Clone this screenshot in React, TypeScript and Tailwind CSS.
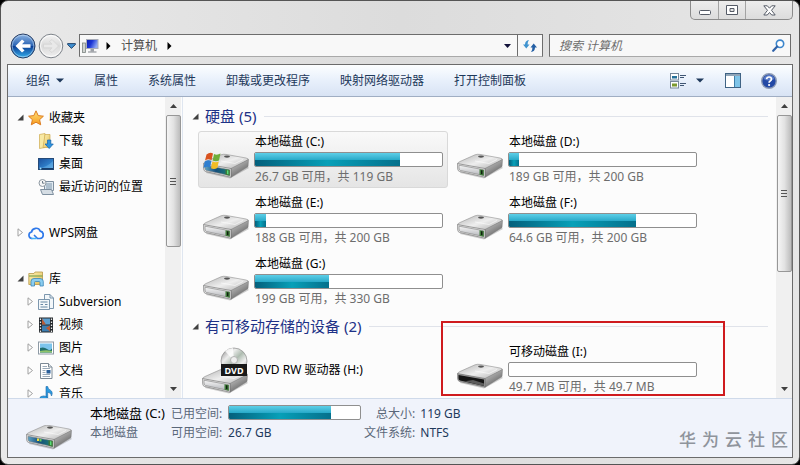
import React from "react";

type Drive = {
  name: string;
  kind: "system" | "disk" | "dvd" | "removable";
  free?: number;
  total?: number;
  unit?: string;
  selected?: boolean;
  marked?: boolean;
};

const disks: Drive[] = [
  { name: "本地磁盘 (C:)", kind: "system", free: 26.7, total: 119, unit: "GB", selected: true },
  { name: "本地磁盘 (D:)", kind: "disk", free: 189, total: 200, unit: "GB" },
  { name: "本地磁盘 (E:)", kind: "disk", free: 188, total: 200, unit: "GB" },
  { name: "本地磁盘 (F:)", kind: "disk", free: 64.6, total: 200, unit: "GB" },
  { name: "本地磁盘 (G:)", kind: "disk", free: 199, total: 330, unit: "GB" },
];

const removable: Drive[] = [
  { name: "DVD RW 驱动器 (H:)", kind: "dvd" },
  { name: "可移动磁盘 (I:)", kind: "removable", free: 49.7, total: 49.7, unit: "MB", marked: true },
];

function Gradients() {
  return (
    <svg className="absolute h-0 w-0" aria-hidden="true">
      <defs>
        <linearGradient id="drvTop" x1="0" y1="0" x2="1" y2="1">
          <stop offset="0" stopColor="#b4b4b4" />
          <stop offset="0.5" stopColor="#eeeeee" />
          <stop offset="1" stopColor="#a9a9a9" />
        </linearGradient>
        <linearGradient id="drvFront" x1="0" y1="0" x2="0" y2="1">
          <stop offset="0" stopColor="#f6f6f6" />
          <stop offset="1" stopColor="#b4b6bb" />
        </linearGradient>
        <linearGradient id="drvSide" x1="0" y1="0" x2="0.6" y2="1">
          <stop offset="0" stopColor="#d6d6d6" />
          <stop offset="1" stopColor="#5e5e5e" />
        </linearGradient>
        <linearGradient id="sysFront" x1="0" y1="0" x2="1" y2="0">
          <stop offset="0" stopColor="#5fa3c4" />
          <stop offset="0.45" stopColor="#154f7c" />
          <stop offset="1" stopColor="#1e7f73" />
        </linearGradient>
        <linearGradient id="disc" x1="0" y1="0" x2="1" y2="1">
          <stop offset="0" stopColor="#7d7d7d" />
          <stop offset="0.3" stopColor="#ededed" />
          <stop offset="0.5" stopColor="#aebcb0" />
          <stop offset="0.7" stopColor="#f0f0f0" />
          <stop offset="1" stopColor="#808080" />
        </linearGradient>
        <linearGradient id="backBlue" x1="0" y1="0" x2="0" y2="1">
          <stop offset="0" stopColor="#8fb6e4" />
          <stop offset="0.48" stopColor="#2b64b4" />
          <stop offset="0.52" stopColor="#0c3f96" />
          <stop offset="1" stopColor="#35b2ef" />
        </linearGradient>
        <linearGradient id="fwdGray" x1="0" y1="0" x2="0" y2="1">
          <stop offset="0" stopColor="#f4f4f4" />
          <stop offset="0.5" stopColor="#dadada" />
          <stop offset="1" stopColor="#f0f0f0" />
        </linearGradient>
        <linearGradient id="screenBlue" x1="0" y1="0" x2="1" y2="0.4">
          <stop offset="0" stopColor="#0b1ea8" />
          <stop offset="0.5" stopColor="#1c36d6" />
          <stop offset="1" stopColor="#8fa8f4" />
        </linearGradient>
        <linearGradient id="folder" x1="0" y1="0" x2="1" y2="1">
          <stop offset="0" stopColor="#fdf3b5" />
          <stop offset="1" stopColor="#e2bb55" />
        </linearGradient>
        <linearGradient id="star" x1="0" y1="0" x2="0" y2="1">
          <stop offset="0" stopColor="#ffe27a" />
          <stop offset="1" stopColor="#f79a1c" />
        </linearGradient>
        <linearGradient id="desk" x1="0" y1="0" x2="1" y2="1">
          <stop offset="0" stopColor="#1b4f9c" />
          <stop offset="0.6" stopColor="#2f7fc9" />
          <stop offset="1" stopColor="#6cb4e8" />
        </linearGradient>
      </defs>
    </svg>
  );
}

function DriveBody({ kind }: { kind: Drive["kind"] }) {
  const slot = kind === "removable";
  return (
    <g>
      <path d="M3 19 27 24.500 46 14 44 12 5 15Z" fill="#000" opacity=".18" />
      <path d="M.5 10Q.5 8.500 3 7.500L18 .8Q20 0 23 .4L43 4Q46 4.600 45 6L28 15.500 2 10.500Z" fill="url(#drvTop)" stroke="#8e8e8e" strokeWidth=".6" />
      <path d="M28 14.500 45.500 5.500 45 12.500 28 23.200Z" fill="url(#drvSide)" stroke="#777" strokeWidth=".5" />
      <path d="M.6 9.600 28 14.500V23.200L2.500 17.500Q.5 17 .6 14Z" fill={slot ? "#9a9a9a" : "#e6e6e6"} stroke="#6c6c6c" strokeWidth=".6" />
      {slot ? (
        <g>
          <path d="M1.500 11 27 15.500V22L3 16.500Q1.500 16 1.500 14Z" fill="#151515" />
          <path d="M8 17.300 16 16 27 19.500V22Z" fill="#5c5c5c" />
        </g>
      ) : (
        <g>
          <path d="M2 11.200 26.500 15.700V21.500L3.500 16.500Q2 16 2 14Z" fill={kind === "system" ? "url(#sysFront)" : "url(#drvFront)"} stroke="#7d7d7d" strokeWidth=".6" />
          <path d="M22.500 15.200 26.800 16V21.800L22.500 20.800Z" fill="#3f7a3a" />
          <path d="M24 16.200 25.400 16.500V20.300L24 20Z" fill={kind === "system" ? "#58e07a" : "#0f1f0f"} />
        </g>
      )}
      <ellipse cx="24" cy="2.600" rx="3" ry="1.100" fill="#555" />
      <path d="M18 7 32 9.500 40 5.500" fill="none" stroke="#fff" strokeWidth=".8" opacity=".7" />
    </g>
  );
}

function WindowsFlag() {
  return (
    <g>
      <path d="M3.500 3.500Q7 .8 10 2.500L8.600 9Q5.500 7.500 2 9.500Z" fill="#d9531f" />
      <path d="M11 3Q14 4.500 17.500 2.500L16 9.500Q13 11 9.700 9.500Z" fill="#6fae3a" />
      <path d="M1.700 10.500Q5 8.500 8.400 10L7 16.500Q4 15 .5 17Z" fill="#2f7fd0" />
      <path d="M9.400 10.500Q12.500 12 15.800 10.500L14.300 17Q11 18.700 8 17.200Z" fill="#f3bd25" />
    </g>
  );
}

function DriveIcon({ kind }: { kind: Drive["kind"] }) {
  return (
    <svg width="48" height="48" viewBox="0 0 48 48" className="shrink-0" aria-hidden="true">
      {kind === "dvd" && <circle cx="32" cy="15" r="13" fill="url(#disc)" stroke="#8d8d8d" strokeWidth=".7" />}
      {kind === "dvd" && <path d="M32 15 23 5Q27 2 31 2Z" fill="#fff" opacity=".8" />}
      <g transform={kind === "dvd" ? "translate(0 23)" : "translate(1 18)"}>
        <DriveBody kind={kind} />
      </g>
      {kind === "system" && (
        <g transform="translate(1 15)">
          <WindowsFlag />
        </g>
      )}
      {kind === "dvd" && (
        <g>
          <circle cx="32" cy="14" r="3.500" fill="#eee" stroke="#b3b3b3" />
          <rect x="19" y="18" width="26" height="12" fill="#191919" />
          <text x="32" y="27.500" textAnchor="middle" fontSize="9" fontWeight="700" fontFamily="Noto Sans, sans-serif" fill="#fff">
            DVD
          </text>
        </g>
      )}
    </svg>
  );
}

function CapacityBar({ used, label }: { used: number; label: string }) {
  return (
    <div role="meter" aria-label={label} aria-valuenow={Math.round(used)} aria-valuemin={0} aria-valuemax={100} className="h-[15px] w-full overflow-hidden rounded-[2px] border border-[#8f8f8f] bg-white">
      <div className="flex h-full flex-col" style={{ width: `${used}%` }}>
        <div className="flex-1 bg-linear-to-b from-[#5ccfe8] to-[#25a9c8]" />
        <div className="flex-1 bg-linear-to-r from-[#04607c] via-[#07a0b8] to-[#05708c]" />
      </div>
    </div>
  );
}

function DriveTile({ drive }: { drive: Drive }) {
  const { name, kind, free, total, unit, selected, marked } = drive;
  const hasSpace = free !== undefined && total !== undefined;
  return (
    <div className="relative">
      <button
        type="button"
        className={
          selected
            ? "flex h-[57px] w-full items-center gap-1 rounded-[3px] border border-[#d9d9d9] bg-linear-to-b from-[#f9f9f9] to-[#e5e5e5] pr-1 pl-[3px] text-left"
            : "flex h-[57px] w-full items-center gap-1 rounded-[3px] border border-transparent pr-1 pl-[3px] text-left"
        }
      >
        <DriveIcon kind={kind} />
        <span className="flex min-w-0 flex-1 flex-col gap-0.5">
          <span className="px-px leading-4 whitespace-nowrap text-black">{name}</span>
          {hasSpace && <CapacityBar used={((total - free) / total) * 100} label={name} />}
          {hasSpace && (
            <span className="px-px leading-4 whitespace-nowrap text-[#6d6d6d]">
              {free} {unit} 可用，共 {total} {unit}
            </span>
          )}
        </span>
      </button>
      {marked && <div className="pointer-events-none absolute -top-5 -right-[23px] bottom-0.5 -left-[11px] border-2 border-[#cf1b1e]" />}
    </div>
  );
}

function DriveGroup({ title, drives }: { title: string; drives: Drive[] }) {
  return (
    <section className="pb-[3px]">
      <h2 className="flex h-7 items-center pr-2 pb-0.5 pl-[9px] text-[15px] text-[#1e3287]">
        <Expanded />
        <span className="ml-1.5 whitespace-nowrap">{title}</span>
        <span className="ml-2 h-px flex-1 bg-[#e0e3ea]" />
      </h2>
      <div className="grid grid-cols-[repeat(auto-fill,250px)] gap-1 pl-[15px]">
        {drives.map((d) => (
          <DriveTile key={d.name} drive={d} />
        ))}
      </div>
    </section>
  );
}

function Expanded() {
  return (
    <svg width="7" height="7" viewBox="0 0 7 7" className="shrink-0" aria-hidden="true">
      <path d="M6.500 .5V6.500H.5Z" fill="#404040" />
    </svg>
  );
}

function Collapsed() {
  return (
    <svg width="7" height="9" viewBox="0 0 7 9" className="shrink-0" aria-hidden="true">
      <path d="M1 .8 5.500 4.500 1 8.200Z" fill="#fff" stroke="#a0a0a0" />
    </svg>
  );
}

function DownArrow() {
  return (
    <svg width="8" height="5" viewBox="0 0 8 5" aria-hidden="true">
      <path d="M0 .5H8L4 4.500Z" fill="#1e395b" />
    </svg>
  );
}

function RightArrow() {
  return (
    <svg width="5" height="8" viewBox="0 0 5 8" aria-hidden="true">
      <path d="M.5 0V8L4.500 4Z" fill="#000" />
    </svg>
  );
}

const treeIcons: Record<string, React.ReactNode> = {
  star: <path d="M8 .8 10.200 5.600 15.400 6.200 11.600 9.700 12.700 14.800 8 12.200 3.300 14.800 4.400 9.700.6 6.200 5.800 5.600Z" fill="url(#star)" stroke="#dc7d22" strokeWidth="1" />,
  download: (
    <g>
      <path d="M1.500 1.500 7 .5V14.500L1.500 15.500Z" fill="#f8e9a4" stroke="#cda94f" strokeWidth=".7" />
      <path d="M7 1.500H12V14.500H5Z" fill="url(#folder)" stroke="#cda94f" strokeWidth=".7" />
      <path d="M9.500 7H12.800V11H15.300L11.200 15.500 7 11H9.500Z" fill="#2f94e0" stroke="#1463a9" strokeWidth=".7" />
    </g>
  ),
  desktop: (
    <g>
      <rect x=".5" y="2.500" width="15" height="11" fill="url(#desk)" stroke="#254a78" />
      <path d="M1 12Q8 12 15 5V13H1Z" fill="#69b1e8" opacity=".5" />
      <rect x="1" y="12" width="14" height="1.500" fill="#173e6c" />
      <circle cx="2.500" cy="12.500" r="1" fill="#9ee1ff" />
    </g>
  ),
  recent: (
    <g>
      <path d="M6.500 2.500H15.500V11.500H6.500Z" fill="#dfe9f1" stroke="#7e8f9f" />
      <path d="M8 5H14M8 7H14M8 9H14" stroke="#7c95aa" />
      <path d="M2.500 10.500H13.500L15.500 15.500H4.500Z" fill="#d5dde4" stroke="#7e8f9f" />
      <circle cx="4.500" cy="4" r="3.500" fill="#f6f6f6" stroke="#8f9aa3" />
      <path d="M4.500 2V4.200H6.500" fill="none" stroke="#60707f" strokeWidth=".9" />
    </g>
  ),
  cloud: (
    <g fill="none" strokeWidth="1.700" strokeLinecap="round">
      <path d="M4 13.500A3.300 3.300 0 0 1 3.500 7 4.600 4.600 0 0 1 12.300 6.200 3.700 3.700 0 0 1 12 13.500H9.500L6.500 10.500" stroke="#2f79ea" />
      <path d="M4 13.500H8" stroke="#45b4f4" />
    </g>
  ),
  library: (
    <g>
      <path d="M.8 2.500H6L7 1H14.500V13.500H.8Z" fill="url(#folder)" stroke="#b8974a" strokeWidth=".8" />
      <path d="M1 5H14.500" stroke="#7fa650" strokeWidth="1.200" />
      <path d="M3 15V10.500Q3 7.500 6 7.500H12Q15.300 7.500 15.300 10.500V15H12V11.500Q12 10.500 11 10.500H7.500Q6.500 10.500 6.500 11.500V15Z" fill="#8bcdf0" stroke="#3c87b8" strokeWidth=".8" />
    </g>
  ),
  subversion: (
    <g fill="#f3f7fa" stroke="#6e8ba5" strokeWidth=".9">
      <path d="M6.500 .5H12L15.500 4V14.500H6.500Z" />
      <path d="M12 .5V4H15.500" fill="none" />
      <path d="M.5 5.500H11.500V15.500H.5Z" />
      <path d="M2.500 8H9.500M2.500 10.500H5M2.500 13H9.500M7 10.500H9.500" stroke="#587b9b" />
    </g>
  ),
  video: (
    <g>
      <rect x="1" y=".5" width="14" height="15" fill="#22262b" />
      <rect x="4" y="1.500" width="8" height="6" fill="#5c9fd0" />
      <rect x="4" y="8.500" width="8" height="6" fill="#3c7db0" />
      <path d="M4 1.500 8 7.500 4 7.500ZM12 8.500 8 11 12 14.500Z" fill="#b95b35" />
      <path d="M2.500 1.500V15M13.500 1.500V15" stroke="#e9e9e9" strokeWidth="1.300" strokeDasharray="1.500 1.500" />
    </g>
  ),
  picture: (
    <g>
      <rect x=".5" y="2" width="15" height="12" fill="#fff" stroke="#8e9aa5" />
      <rect x="2" y="3.500" width="12" height="9" fill="#7cc4ec" />
      <path d="M2 8Q6 6.500 9 9T14 8.500V12.500H2Z" fill="#1f6e6d" />
      <path d="M2 11Q8 9.500 14 11V12.500H2Z" fill="#8fc36b" />
    </g>
  ),
  document: (
    <g>
      <path d="M2.500 .5H10.500L14 4V15.500H2.500Z" fill="#fff" stroke="#7d8a96" />
      <path d="M10.500 .5V4H14" fill="#e2e8ed" stroke="#7d8a96" />
      <path d="M4.500 3.500H9M4.500 5.500H12M4.500 7.500H7.500M4.500 9.500H7.500M4.500 11.500H12M4.500 13.500H12" stroke="#9aaab9" />
      <rect x="8.500" y="7" width="4" height="3.500" fill="#2a5f99" />
    </g>
  ),
  music: (
    <g fill="#2b9be0" stroke="#1b67a7" strokeWidth=".6">
      <path d="M8 .5H9.700Q9.800 3 12.500 4.200 15.300 6 13.500 10 13.500 6.700 9.700 6.200V12.500H8Z" />
      <ellipse cx="5.700" cy="12.700" rx="4" ry="2.800" />
    </g>
  ),
};

type Node = { label: string; icon: string; depth: 0 | 1; open?: boolean; branch?: boolean };

const tree: Node[][] = [
  [
    { label: "收藏夹", icon: "star", depth: 0, open: true, branch: true },
    { label: "下载", icon: "download", depth: 1 },
    { label: "桌面", icon: "desktop", depth: 1 },
    { label: "最近访问的位置", icon: "recent", depth: 1 },
  ],
  [{ label: "WPS网盘", icon: "cloud", depth: 0, branch: true }],
  [
    { label: "库", icon: "library", depth: 0, open: true, branch: true },
    { label: "Subversion", icon: "subversion", depth: 1, branch: true },
    { label: "视频", icon: "video", depth: 1, branch: true },
    { label: "图片", icon: "picture", depth: 1, branch: true },
    { label: "文档", icon: "document", depth: 1, branch: true },
    { label: "音乐", icon: "music", depth: 1, branch: true },
  ],
];

function TreeRow({ node }: { node: Node }) {
  return (
    <li>
      <button type="button" className={node.depth === 0 ? "flex h-[23px] w-full items-center pl-[9px]" : "flex h-[23px] w-full items-center pl-[19px]"}>
        <span className="flex w-[11px] shrink-0">{node.branch && (node.open ? <Expanded /> : <Collapsed />)}</span>
        <svg width="16" height="16" viewBox="0 0 16 16" className="shrink-0" aria-hidden="true">
          {treeIcons[node.icon]}
        </svg>
        <span className="ml-[5px] whitespace-nowrap text-black">{node.label}</span>
      </button>
    </li>
  );
}

function Scrollbar({ thumb }: { thumb: React.ReactNode }) {
  return (
    <div className="flex w-4 shrink-0 flex-col items-center bg-[#f0f0f0]" aria-hidden="true">
      <span className="flex h-[18px] items-center">
        <svg width="7" height="4" viewBox="0 0 7 4">
          <path d="M0 4 3.500 0 7 4Z" fill="#404040" />
        </svg>
      </span>
      {thumb}
      <span className="flex-1" />
      <span className="flex h-[18px] items-center">
        <svg width="7" height="4" viewBox="0 0 7 4">
          <path d="M0 0 3.500 4 7 0Z" fill="#404040" />
        </svg>
      </span>
    </div>
  );
}

function Grip() {
  return (
    <span className="flex w-1.5 flex-col gap-0.5">
      <span className="h-px bg-[#555]" />
      <span className="h-px bg-[#555]" />
      <span className="h-px bg-[#555]" />
    </span>
  );
}

function TitleBar() {
  return (
    <header className="flex h-[33px] items-start justify-end">
      <div className="flex h-[19px] overflow-hidden rounded-b-[5px] border border-t-0 border-[#8b8b8b] bg-linear-to-b from-[#ededed] to-[#dcdcdc]">
        <button type="button" aria-label="最小化" className="flex w-7 items-center justify-center border-r border-[#a3a3a3]">
          <svg width="12" height="11" viewBox="0 0 12 11">
            <rect x=".5" y="5.500" width="11" height="4" rx="1" fill="#fff" stroke="#555b66" />
          </svg>
        </button>
        <button type="button" aria-label="最大化" className="flex w-[27px] items-center justify-center border-r border-[#a3a3a3]">
          <svg width="12" height="11" viewBox="0 0 12 11">
            <path d="M.5 .5H11.500V9.500H.5ZM4 3.500V6.500H8V3.500Z" fill="#fff" fillRule="evenodd" stroke="#555b66" />
          </svg>
        </button>
        <button type="button" aria-label="关闭" className="flex w-[46px] items-center justify-center">
          <svg width="13" height="11" viewBox="0 0 13 11">
            <path d="M.8 .8H4.300L6.500 3.200 8.700.8H12.200L8.500 5.300 12.200 10H8.700L6.500 7.500 4.300 10H.8L4.500 5.300Z" fill="#fff" stroke="#555b66" />
          </svg>
        </button>
      </div>
    </header>
  );
}

function AddressRow() {
  return (
    <div className="mb-[7px] flex h-[23px] items-center pr-0.5 pl-[3px]">
      <div className="flex w-[69px] shrink-0 items-center">
        <button type="button" aria-label="后退">
          <svg width="26" height="26" viewBox="0 0 26 26">
            <circle cx="13" cy="13" r="12" fill="url(#backBlue)" stroke="#2b3f63" />
            <circle cx="13" cy="13" r="10.800" fill="none" stroke="#c9def5" strokeWidth=".8" opacity=".7" />
            <path d="M5.500 13 12 6.500 14.500 8.500 12 11.200H20.500V14.800H12L14.500 17.500 12 19.500Z" fill="#fff" />
          </svg>
        </button>
        <button type="button" aria-label="前进" className="ml-0.5">
          <svg width="26" height="26" viewBox="0 0 26 26">
            <circle cx="13" cy="13" r="11.800" fill="url(#fwdGray)" stroke="#7d838a" />
            <circle cx="13" cy="13" r="10.500" fill="none" stroke="#fff" strokeWidth=".8" />
            <path d="M20.500 13 14 6.500 11.500 8.500 14 11.200H5.500V14.800H14L11.500 17.500 14 19.500Z" fill="#e9e9e9" stroke="#cfcfcf" strokeWidth=".6" />
          </svg>
        </button>
        <button type="button" aria-label="最近的页面" className="ml-[3px]">
          <svg width="9" height="6" viewBox="0 0 9 6">
            <path d="M.6 .6H8.400V1.500L4.500 5.400.6 1.500Z" fill="#3f8fd0" stroke="#1d3a60" strokeWidth=".9" />
          </svg>
        </button>
      </div>
      <nav aria-label="地址" className="flex h-full min-w-0 flex-1 items-center border border-[#6d6d6d] border-b-[#a9a9a9] bg-[#f8f8f8]">
        <svg width="17" height="16" viewBox="0 0 17 16" className="ml-0.5 shrink-0" aria-hidden="true">
          <rect x=".5" y="5" width="3" height="9.500" fill="#cfd3d0" stroke="#7c8480" strokeWidth=".8" />
          <rect x="4.500" y="1.500" width="11.500" height="9" fill="url(#screenBlue)" stroke="#a9adba" />
          <path d="M8.500 11H12V13.500H8.500Z" fill="#9ea2a8" />
          <path d="M6 14H14.500" stroke="#80858c" />
        </svg>
        <span className="ml-[7px]">
          <RightArrow />
        </span>
        <button type="button" className="ml-2.5 text-[#4c4c4c]">
          计算机
        </button>
        <span className="ml-2.5">
          <RightArrow />
        </span>
        <span className="flex-1" />
        <button type="button" aria-label="以前的位置" className="flex h-full w-5 items-center justify-center">
          <svg width="7" height="4" viewBox="0 0 7 4">
            <path d="M0 0H7L3.500 4Z" fill="#12123a" />
          </svg>
        </button>
        <button type="button" aria-label="刷新" className="flex h-full w-[25px] items-center justify-center border-l border-[#6d6d6d]">
          <svg width="14" height="14" viewBox="0 0 14 14">
            <path d="M0 5.500H2Q2 1.500 6 1 4.500 2.500 4.600 5.500H6.500L3.300 9.500Z" fill="#3f93cf" />
            <path d="M14 8.500H12Q12 12.500 8 13 9.500 11.500 9.400 8.500H7.500L10.700 4.500Z" fill="#2560a5" />
          </svg>
        </button>
      </nav>
      <label className="ml-1.5 flex h-full w-[242px] items-center border border-[#6d6d6d] border-b-[#a9a9a9] bg-[#f8f8f8] pr-[5px] pl-[9px]">
        <span className="sr-only">搜索</span>
        <input type="text" placeholder="搜索 计算机" className="h-full min-w-0 flex-1 bg-transparent leading-5 italic outline-none placeholder:text-[#6d6d6d]" />
        <svg width="13" height="13" viewBox="0 0 13 13" aria-hidden="true">
          <circle cx="8" cy="4.800" r="3.700" fill="#fff" stroke="#3c86cc" strokeWidth="1.600" />
          <path d="M5.200 7.600 1.200 11.800" stroke="#2f62a8" strokeWidth="2.200" strokeLinecap="round" />
        </svg>
      </label>
    </div>
  );
}

function CommandBar() {
  const commands = ["属性", "系统属性", "卸载或更改程序", "映射网络驱动器", "打开控制面板"];
  return (
    <div role="toolbar" className="flex h-8 shrink-0 items-center border-b border-[#a0aec3] bg-linear-to-b from-[#fcfeff] from-0% via-[#e8f0fb] via-50% to-[#d8e3f4] pr-[15px] pl-[18px] text-[#1e395b]">
      <div className="flex items-center gap-[30px]">
        <button type="button" className="flex items-center gap-1.5 whitespace-nowrap">
          组织
          <DownArrow />
        </button>
        {commands.map((c) => (
          <button key={c} type="button" className="whitespace-nowrap">
            {c}
          </button>
        ))}
      </div>
      <span className="flex-1" />
      <button type="button" aria-label="更改您的视图" className="flex items-center gap-[9px]">
        <svg width="17" height="16" viewBox="0 0 17 16">
          <rect x=".5" y=".5" width="8" height="6.500" fill="#fff" stroke="#77879a" />
          <rect x="2" y="3" width="5" height="2.500" fill="#24709a" />
          <rect x=".5" y="8.500" width="8" height="6.500" fill="#fff" stroke="#77879a" />
          <rect x="2" y="10.500" width="5" height="3" fill="#7c9a2f" />
          <path d="M10 2.500H16M10 4.500H14M10 10.500H16M10 12.500H14" stroke="#3e5573" />
        </svg>
        <DownArrow />
      </button>
      <button type="button" aria-label="显示预览窗格" className="ml-[21px]">
        <svg width="16" height="15" viewBox="0 0 16 15">
          <rect x=".5" y=".5" width="15" height="14" fill="#fff" stroke="#3f6384" />
          <rect x="1" y="1" width="14" height="2" fill="#8fa5b8" />
          <rect x="10" y="3" width="5" height="11" fill="#7fc4e8" />
          <path d="M9.500 3V14" stroke="#3f7ea8" />
        </svg>
      </button>
      <button type="button" aria-label="获取帮助" className="ml-5">
        <svg width="16" height="16" viewBox="0 0 16 16">
          <circle cx="8" cy="8" r="7.300" fill="#2349a6" stroke="#8d9bb5" strokeWidth="1.400" />
          <path d="M2.500 6Q4 2 8 2T13.500 6Q8 9 2.500 6Z" fill="#7c9ce0" opacity=".6" />
          <path d="M5.600 6.200Q5.800 4 8.100 4T10.500 6.100Q10.500 7.200 9.200 8 8.100 8.600 8.100 9.800" fill="none" stroke="#fff" strokeWidth="1.700" />
          <circle cx="8.100" cy="12" r="1.100" fill="#fff" />
        </svg>
      </button>
    </div>
  );
}

function DetailsPane() {
  return (
    <footer className="flex h-[59px] shrink-0 items-start border-t border-[#cfdaea] bg-[#f0f3fb] pt-[5px] pl-[18px]">
      <svg width="48" height="26" viewBox="0 0 48 26" className="mt-[21px] shrink-0" aria-hidden="true">
        <DriveBody kind="system" />
        <rect x="11" y="13.500" width="2" height="2.500" fill="#f1dc3d" />
        <rect x="13.500" y="14" width="2" height="2.500" fill="#6fce59" />
      </svg>
      <div className="ml-4 whitespace-nowrap">
        <div className="text-[13px] leading-[19px] text-black">本地磁盘 (C:)</div>
        <div className="leading-[19px] text-[#5a6779]">本地磁盘</div>
      </div>
      <dl className="ml-1.5 grid grid-cols-[auto_133px] gap-x-1.5 leading-[19px] whitespace-nowrap text-[#1e395b]">
        <dt className="text-[#5a6779]">已用空间:</dt>
        <dd className="pt-px">
          <CapacityBar used={((119 - 26.7) / 119) * 100} label="已用空间" />
        </dd>
        <dt className="text-[#5a6779]">可用空间:</dt>
        <dd>26.7 GB</dd>
      </dl>
      <dl className="ml-[3px] grid grid-cols-[auto_auto] gap-x-[5px] leading-[19px] whitespace-nowrap text-[#1e395b]">
        <dt className="text-right text-[#5a6779]">总大小:</dt>
        <dd>119 GB</dd>
        <dt className="text-right text-[#5a6779]">文件系统:</dt>
        <dd>NTFS</dd>
      </dl>
      <div className="mt-6 mr-1 ml-auto flex gap-1.5 text-[17px] leading-6 font-medium text-[#8f949c]">
        {["华", "为", "云", "社", "区"].map((ch) => (
          <span key={ch}>{ch}</span>
        ))}
      </div>
    </footer>
  );
}

export default function App() {
  return (
    <div className="h-screen bg-black font-['Noto_Sans','Noto_Sans_CJK_SC',sans-serif] text-[12px]">
      <Gradients />
      <div className="flex h-full flex-col rounded-lg border border-[#555] bg-linear-to-r from-[#e9e9e9] via-[#dcdcdc] to-[#e6e6e6] px-1.5 pb-1.5">
        <TitleBar />
        <AddressRow />
        <div className="flex min-h-0 flex-1 flex-col border border-[#6b6b6b]">
          <CommandBar />
          <div className="flex min-h-0 flex-1 bg-[#fcfcfc]">
            <aside className="flex w-[175px] shrink-0 border-r border-[#dfe6f0] pr-px">
              <nav aria-label="导航窗格" className="flex min-w-0 flex-1 flex-col gap-[23px] overflow-hidden pt-[9px]">
                {tree.map((group) => (
                  <ul key={group[0].label}>
                    {group.map((n) => (
                      <TreeRow key={n.label} node={n} />
                    ))}
                  </ul>
                ))}
              </nav>
              <Scrollbar
                thumb={
                  <span className="flex h-[132px] w-[15px] items-center justify-center rounded-[2px] border border-[#979797] bg-linear-to-r from-[#f5f5f5] via-[#e2e2e2] to-[#bcbcbc]">
                    <Grip />
                  </span>
                }
              />
            </aside>
            <main className="flex min-w-0 flex-1">
              <div className="min-w-0 flex-1 overflow-hidden pt-1.5">
                <DriveGroup title="硬盘 (5)" drives={disks} />
                <DriveGroup title="有可移动存储的设备 (2)" drives={removable} />
              </div>
              <Scrollbar
                thumb={
                  <span className="flex h-[157px] w-[15px] items-center justify-center rounded-[2px] border border-[#979797] bg-linear-to-r from-[#f5f5f5] via-[#e2e2e2] to-[#bcbcbc]">
                    <Grip />
                  </span>
                }
              />
            </main>
          </div>
          <DetailsPane />
        </div>
      </div>
    </div>
  );
}
